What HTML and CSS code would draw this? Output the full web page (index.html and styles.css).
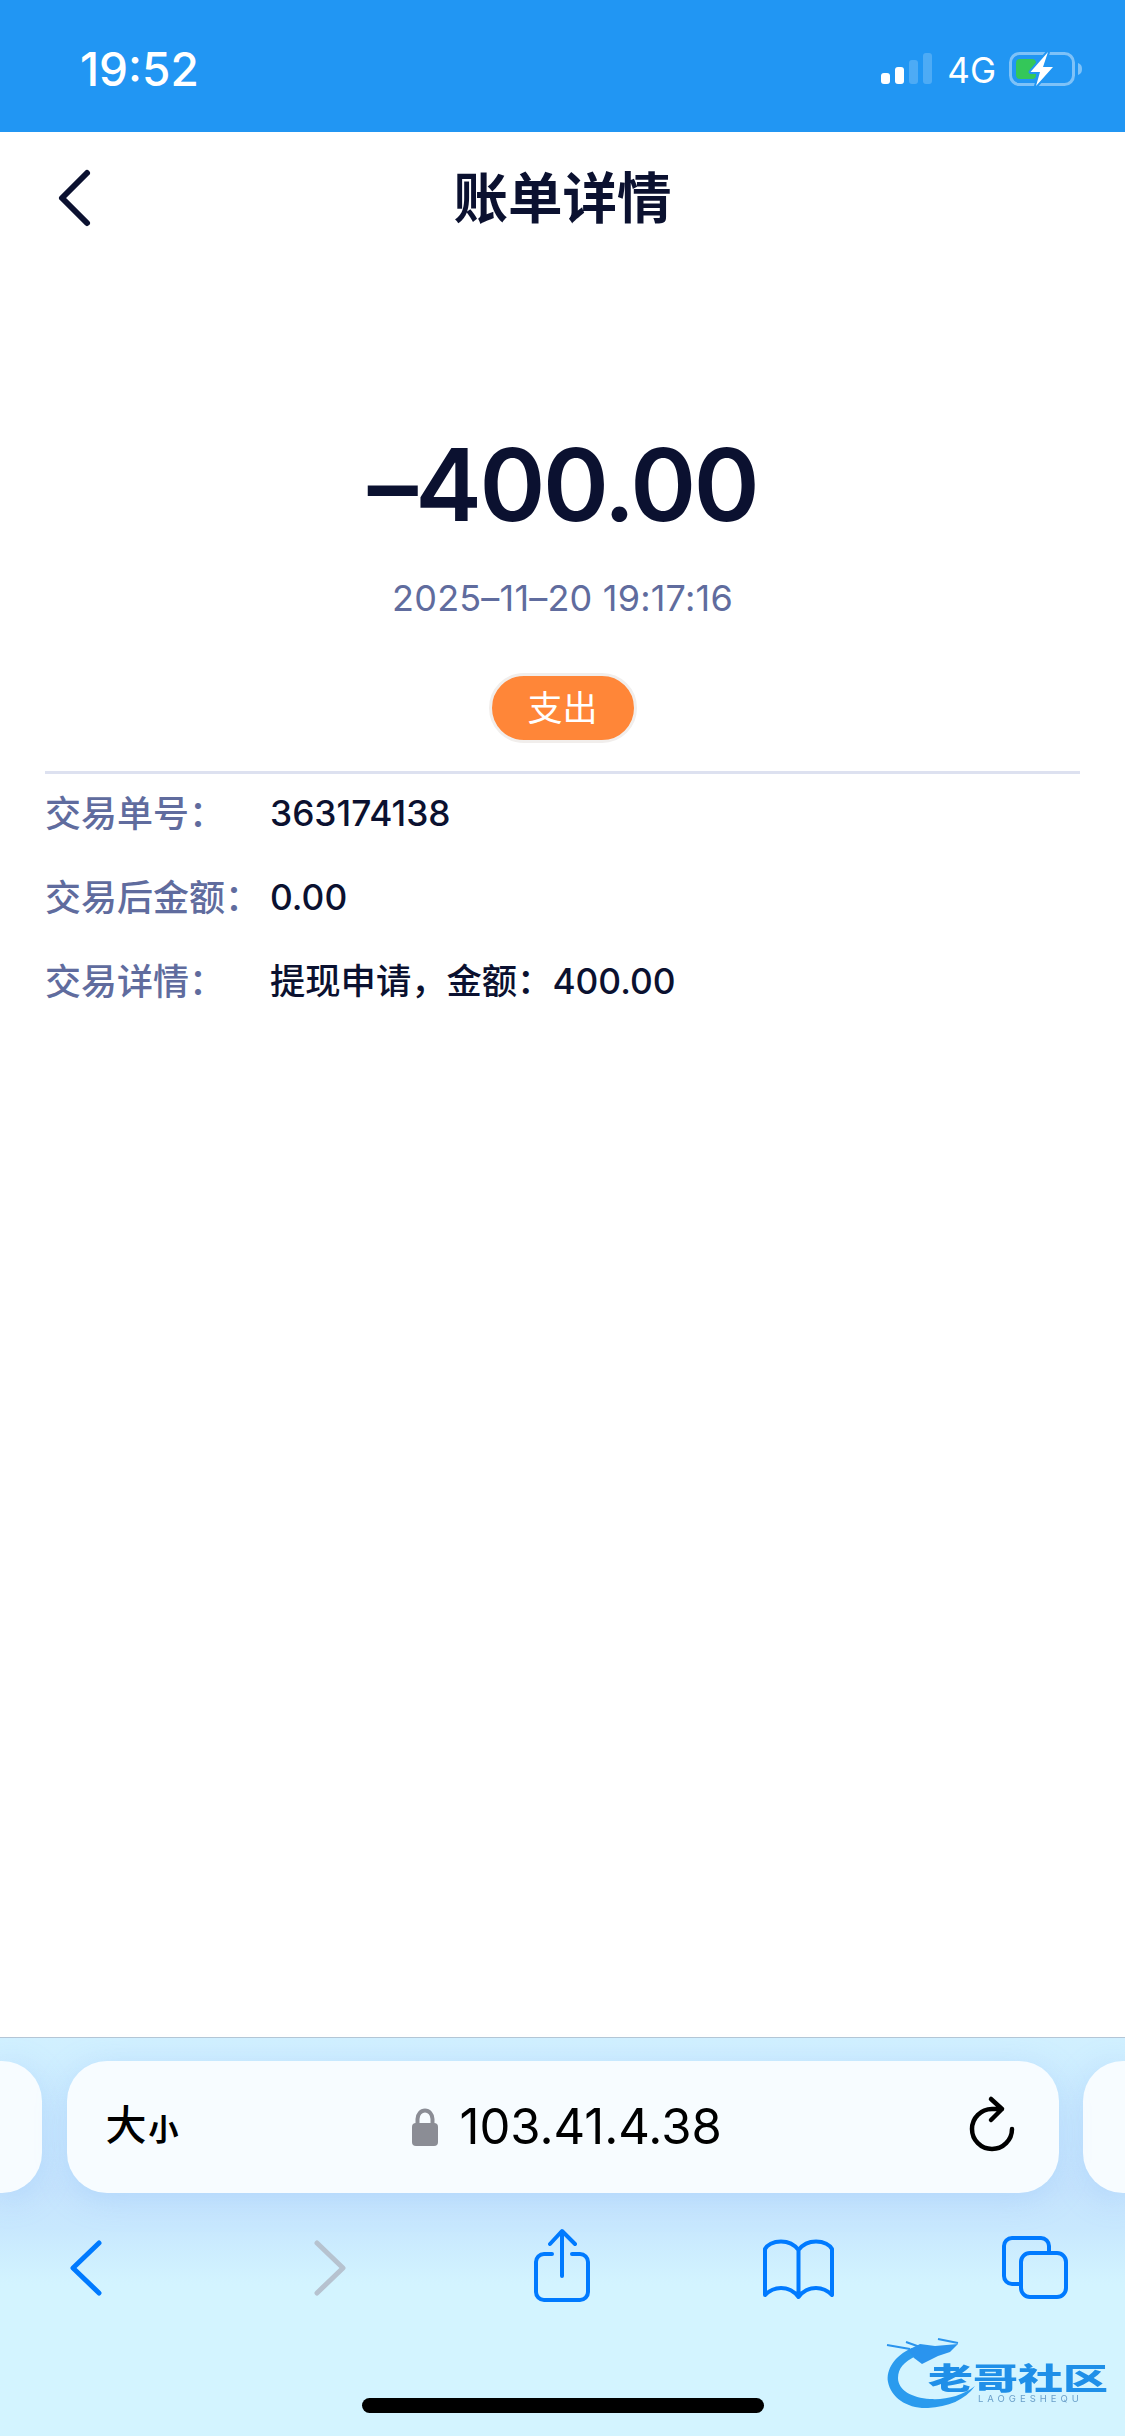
FILE: index.html
```html
<!DOCTYPE html>
<html lang="zh-CN">
<head>
<meta charset="utf-8">
<title>账单详情</title>
<link rel="stylesheet" href="styles.css">
</head>
<body>
<div class="screen">
  <div class="status-bar">
    <span class="clock">19:52</span>
    <div class="status-right">
      <svg class="signal" width="52" height="32" viewBox="0 0 52 32"><rect x="0" y="20" width="9" height="11" rx="3" fill="#fff"/><rect x="14" y="14" width="9" height="17" rx="3" fill="#fff"/><rect x="28" y="7" width="9" height="24" rx="3" fill="#fff" fill-opacity=".2"/><rect x="42" y="0" width="9" height="31" rx="3" fill="#fff" fill-opacity=".2"/></svg>
      <span class="network">4G</span>
      <svg class="battery" width="90" height="48" viewBox="0 0 90 48"><rect x="10.5" y="8.5" width="63" height="31" rx="9" fill="none" stroke="#fff" stroke-opacity=".42" stroke-width="3"/><rect x="16" y="14" width="20" height="20" rx="4" fill="#34c759"/><path d="M78 18c3 1 4 3 4 6s-1 5-4 6z" fill="#fff" fill-opacity=".42"/><path d="M48 7 30.500 27H40l-4 14 17-19H43z" fill="#fff" stroke="#2196f3" stroke-width="4" stroke-linejoin="round" paint-order="stroke"/></svg>
    </div>
  </div>

  <header class="page-header">
    <svg class="header-back" width="50" height="60" viewBox="0 0 50 60"><path d="M37 5 12 30l25 25" fill="none" stroke="#0b1130" stroke-width="6" stroke-linecap="round" stroke-linejoin="round"/></svg>
    <h1 class="page-title">账单详情</h1>
  </header>

  <section class="summary">
    <div class="amount">–400.00</div>
    <div class="date">2025–11–20 19:17:16</div>
    <span class="pill">支出</span>
  </section>

  <section class="details">
    <div class="row"><span class="label">交易单号：</span><span class="value">363174138</span></div>
    <div class="row"><span class="label">交易后金额：</span><span class="value">0.00</span></div>
    <div class="row"><span class="label">交易详情：</span><span class="value">提现申请，金额：400.00</span></div>
  </section>

  <footer class="toolbar">
    <div class="tabs">
      <div class="tab-peek tab-peek-left"></div>
      <div class="url-bar">
        <span class="reader">大<small class="reader-small">小</small></span>
        <div class="address">
          <svg class="lock" width="28" height="40" viewBox="0 0 28 40"><path d="M6.500 17V12a7.500 8.500 0 0 1 15 0v5" fill="none" stroke="#8b8d95" stroke-width="4"/><rect x="1" y="16" width="26" height="23" rx="4" fill="#8b8d95"/></svg>
          <span class="url">103.41.4.38</span>
        </div>
        <svg class="reload" width="60" height="60" viewBox="0 0 60 60"><path d="M48 35A20 20 0 1 1 28 15h10M27 5l11 10-11 11" fill="none" stroke="#000" stroke-width="4.500" stroke-linecap="round" stroke-linejoin="round"/></svg>
      </div>
      <div class="tab-peek tab-peek-right"></div>
    </div>
    <nav class="nav-icons">
      <svg width="80" height="80" viewBox="0 0 80 80"><path d="M53 15 27 40l26 25" class="icon-line"/></svg>
      <svg width="80" height="80" viewBox="0 0 80 80"><path d="M27 15 53 40 27 65" class="icon-line icon-disabled"/></svg>
      <svg width="80" height="80" viewBox="0 0 80 80"><path d="M30 26h-8a8 8 0 0 0-8 8v30a8 8 0 0 0 8 8h36a8 8 0 0 0 8-8V34a8 8 0 0 0-8-8h-8M40 48V4M28 16 40 3l13 13" class="icon-line icon-thin"/></svg>
      <svg width="80" height="80" viewBox="0 0 80 80"><path d="M40.500 22v46M40.500 22C36 16 29 13.500 23 13.500 15 13.500 9 17 7 21v46c5-5 10-7 16-7 7 0 13 3 17.500 9 4.500-6 10.500-9 17.500-9 6 0 11 2 16 7V21c-2-4-8-7.500-16-7.500-6 0-13 2.500-17.500 8.500" class="icon-line icon-thin"/></svg>
      <svg width="80" height="80" viewBox="0 0 80 80"><path d="M25 56h-8a8 8 0 0 1-8-8V18a8 8 0 0 1 8-8h29a8 8 0 0 1 8 8v7" class="icon-line icon-thin"/><rect x="26" y="25" width="45" height="44" rx="9" class="icon-line icon-thin"/></svg>
    </nav>
    <div class="home-indicator"></div>
    <div class="watermark">
      <svg class="watermark-dragon" width="275" height="116" viewBox="0 0 275 116"><path d="M62 28C44 36 36 50 38 62 41 78 58 89 78 88 98 87 115 80 125 66 112 76 96 80 80 79 62 78 48 70 48 58 48 48 54 42 66 36Z" fill="#2a9bee"/><path d="M58 30 70 24 85 26 108 24 100 32 88 36 72 44 64 38Z" fill="#2a94ee"/><path d="M37 25 60 29M56 22 70 27M88 19 108 23" fill="none" stroke="#2a94ee" stroke-width="2"/></svg>
      <span class="watermark-name">老哥社区</span>
      <span class="watermark-sub">LAOGESHEQU</span>
    </div>
  </footer>
</div>
</body>
</html>
```

FILE: styles.css
```css
* { box-sizing: border-box; }
html, body { margin: 0; padding: 0; background: #fff; }
body { font-family: Inter, "Noto Sans CJK SC", sans-serif; color: #0b1130; }
.screen { width: 1125px; height: 2436px; display: flex; flex-direction: column; overflow: hidden; }

.status-bar { height: 132px; flex: none; background: #2196f3; color: #fff; display: flex; justify-content: space-between; align-items: flex-start; padding: 42px 35px 0 80px; }
.clock { font-size: 46px; line-height: 54px; font-weight: 500; }
.status-right { display: flex; align-items: flex-start; }
.signal { margin-top: 11px; }
.network { font-size: 35px; line-height: 42px; margin: 7px 0 0 14px; }
.battery { margin: 3px 0 0 4px; }

.page-header { height: 132px; flex: none; display: flex; align-items: center; justify-content: center; position: relative; }
.header-back { position: absolute; left: 50px; top: 36px; }
.page-title { margin: 0; font-size: 54.500px; line-height: 70px; font-weight: 600; }

.summary { display: flex; flex-direction: column; align-items: center; padding-top: 161px; }
.amount { font-size: 100px; line-height: 120px; font-weight: 600; letter-spacing: -2.500px; }
.date { font-size: 36px; line-height: 44px; margin-top: 31px; color: #606c9e; letter-spacing: .2px; }
.pill { margin-top: 53px; width: 148px; height: 70px; border-radius: 35px; background: #ff8638; border: 3px solid #f1eeec; color: #fff; font-size: 35px; line-height: 64px; text-align: center; }

.details { margin: 28px 45px 0; border-top: 3px solid #dde1f0; }
.row { height: 84px; display: flex; align-items: center; font-size: 36px; line-height: 44px; padding-bottom: 2px; }
.row:first-child { margin-top: -1px; }
.label { width: 225px; flex: none; color: #606c9e; font-weight: 500; }
.value { color: #0b1130; font-size: 35.300px; font-weight: 450; }

.toolbar { margin-top: auto; height: 399px; flex: none; position: relative; border-top: 1px solid #b4c6d6; padding-top: 23px; background: linear-gradient(180deg, #d1f0ff 0, #c6e4fd 38%, #c8e8fe 48%, #d3f4ff 62%, #d3f4ff 100%); }
.tabs { display: flex; justify-content: space-between; height: 132px; }
.tab-peek { width: 42px; background: #f7fcff; box-shadow: 0 6px 30px rgba(140, 190, 250, .35); }
.tab-peek-left { border-radius: 0 40px 40px 0; }
.tab-peek-right { border-radius: 40px 0 0 40px; }
.url-bar { width: 992px; background: #f7fcff; border-radius: 40px; display: flex; align-items: center; position: relative; padding-left: 39px; box-shadow: 0 6px 30px rgba(140, 190, 250, .35); }
.reader { font-size: 41px; line-height: 50px; color: #000; font-weight: 500; width: 100%; }
.reader-small { font-size: 30px; margin-left: 2px; font-weight: 700; }
.address { position: absolute; left: 344px; top: 44px; display: flex; align-items: center; }
.url { font-size: 49px; line-height: 44px; margin-left: 21px; color: #000; white-space: nowrap; }
.reload { position: absolute; right: 35px; top: 33px; }

.nav-icons { display: grid; grid-template-columns: 244px 232px 236px 237px 80px; padding-left: 46px; margin-top: 35px; }
.icon-line { fill: none; stroke: #007aff; stroke-width: 5; stroke-linecap: round; stroke-linejoin: round; }
.icon-thin { stroke-width: 4; }
.icon-disabled { stroke: #b6c2cf; }

.home-indicator { position: absolute; left: 362px; top: 360px; width: 402px; height: 15px; border-radius: 8px; background: #000; }

.watermark { position: absolute; left: 850px; top: 282px; width: 275px; height: 116px; filter: blur(.7px); }
.watermark-dragon { position: absolute; left: 0; top: 0; }
.watermark-name { position: absolute; left: 78px; top: 40px; font-size: 45px; line-height: 34px; font-weight: 900; color: #1f8fe8; white-space: nowrap; transform-origin: left center; transform: scaleY(.65); font-family: "Noto Sans CJK SC", sans-serif; }
.watermark-sub { position: absolute; left: 128px; top: 74px; font-size: 9.500px; line-height: 10px; letter-spacing: 4px; color: #6a9fca; white-space: nowrap; }
```
